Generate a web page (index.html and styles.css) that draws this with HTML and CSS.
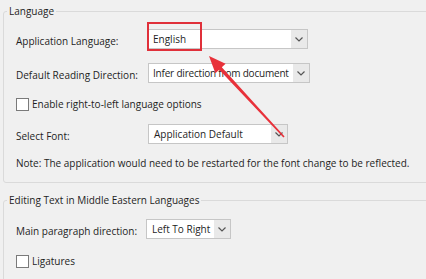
FILE: index.html
```html
<!DOCTYPE html>
<html>
<head>
<meta charset="utf-8">
<link rel="stylesheet" href="styles.css">
</head>
<body>
<div class="page">
  <fieldset class="group group-lang">
    <legend class="legend">Language</legend>
    <div class="row row1">
      <span class="label">Application Language:</span>
      <div class="select w1"><span class="value">English</span><span class="arrow"><svg width="8" height="5" viewBox="0 0 8 5"><polyline points="0.5,0.5 4,4 7.5,0.5" fill="none" stroke="#555" stroke-width="1.2"/></svg></span></div>
    </div>
    <div class="row row2">
      <span class="label">Default Reading Direction:</span>
      <div class="select w2"><span class="value tight">Infer direction from document</span><span class="arrow"><svg width="8" height="5" viewBox="0 0 8 5"><polyline points="0.5,0.5 4,4 7.5,0.5" fill="none" stroke="#555" stroke-width="1.2"/></svg></span></div>
    </div>
    <div class="row row3">
      <span class="check"></span><span class="check-label">Enable right-to-left language options</span>
    </div>
    <div class="row row4">
      <span class="label">Select Font:</span>
      <div class="select w3"><span class="value">Application Default</span><span class="arrow"><svg width="8" height="5" viewBox="0 0 8 5"><polyline points="0.5,0.5 4,4 7.5,0.5" fill="none" stroke="#555" stroke-width="1.2"/></svg></span></div>
    </div>
    <div class="row row5">
      <span class="note">Note: The application would need to be restarted for the font change to be reflected.</span>
    </div>
  </fieldset>
  <fieldset class="group group-edit">
    <legend class="legend">Editing Text in Middle Eastern Languages</legend>
    <div class="row row6">
      <span class="label label2">Main paragraph direction:</span>
      <div class="select w4"><span class="value">Left To Right</span><span class="arrow"><svg width="8" height="5" viewBox="0 0 8 5"><polyline points="0.5,0.5 4,4 7.5,0.5" fill="none" stroke="#555" stroke-width="1.2"/></svg></span></div>
    </div>
    <div class="row row7">
      <span class="check"></span><span class="check-label">Ligatures</span>
    </div>
  </fieldset>
</div>
<div class="highlight"></div>
<svg class="pointer" width="426" height="279" viewBox="0 0 426 279">
  <polygon points="209,56 225.6,63.7 221.8,67.3 284.6,136.5 283.4,137.5 219.2,69.7 215.4,73.3" fill="#e8313a"/>
</svg>
</body>
</html>
```
FILE: styles.css
```css
html, body {
  margin: 0;
  padding: 0;
  background: #f0f0f0;
  overflow: hidden;
  width: 426px;
  height: 279px;
}
body {
  font-family: "Open Sans", "Noto Sans", sans-serif;
  font-size: 10px;
  color: #1e1e1e;
  position: relative;
}
.page {
  padding-left: 3px;
  padding-top: 3px;
}
.group {
  margin: 0;
  border: 1px solid #dadada;
  border-radius: 3px;
  width: 460px;
  padding: 0 0 0 12px;
  box-sizing: border-box;
  min-width: 0;
}
.group-lang {
  padding-top: 10px;
  padding-bottom: 9px;
}
.group-edit {
  margin-top: 9px;
  padding-top: 11px;
  height: 120px;
}
.legend {
  padding: 0 2px;
  margin-left: -9px;
  line-height: 16px;
  height: 16px;
}
.row {
  display: flex;
  align-items: center;
  height: 20px;
}
.row2 { margin-top: 14px; }
.row3 { margin-top: 11px; }
.row4 { margin-top: 10px; }
.row5 { margin-top: 9px; }
.row7 { margin-top: 12px; }
.label {
  width: 132px;
  flex: none;
  padding-top: 3px;
  white-space: nowrap;
}
.label2 { width: 130px; }
.select {
  display: flex;
  height: 20px;
  box-sizing: border-box;
  border: 1px solid #c6c6c6;
  background: #fff;
  flex: none;
}
.w1 { width: 161px; margin-left: -1px; }
.w2 { width: 162px; }
.w3 { width: 140px; }
.w4 { width: 85px; }
.value {
  flex: 1;
  min-width: 0;
  overflow: hidden;
  white-space: nowrap;
  padding-left: 5px;
  line-height: 18px;
}
.tight {
  letter-spacing: -0.2px;
  padding-left: 4px;
}
.arrow {
  width: 16px;
  flex: none;
  background: #e9e9e9;
  display: flex;
  align-items: center;
  justify-content: center;
}
.check {
  width: 11px;
  height: 11px;
  border: 1px solid #7a7a7a;
  background: #fff;
  flex: none;
  margin-right: 3px;
}
.check-label, .note { white-space: nowrap; }
.highlight {
  position: absolute;
  left: 147px;
  top: 22px;
  width: 51px;
  height: 25px;
  border: 2px solid #e0303a;
}
.pointer {
  position: absolute;
  left: 0;
  top: 0;
}
```
